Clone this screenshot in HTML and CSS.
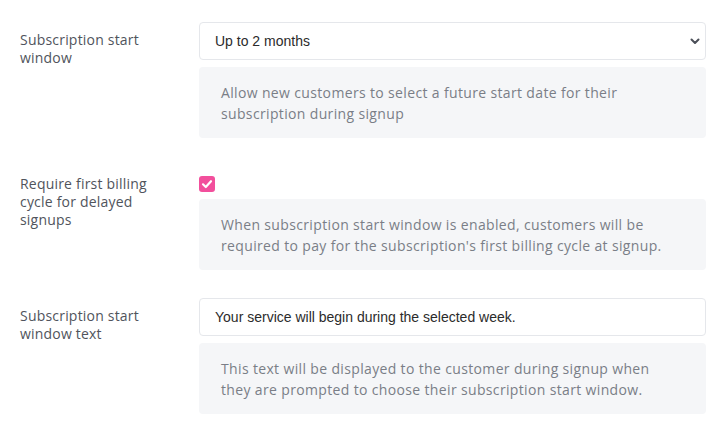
FILE: index.html
```html
<!DOCTYPE html>
<html>
<head>
<meta charset="utf-8">
<link rel="stylesheet" href="styles.css">
</head>
<body>
<div class="form">
  <div class="row">
    <div class="label">Subscription start window</div>
    <div class="field">
      <div class="select-wrap">
        <div class="control">Up to 2 months</div>
        <svg class="chevron" width="10" height="7" viewBox="0 0 10 7"><path d="M1.5 1.5 L5 5 L8.5 1.5" fill="none" stroke="#4b4f58" stroke-width="2" stroke-linecap="round" stroke-linejoin="round"/></svg>
      </div>
      <div class="help">Allow new customers to select a future start date for their subscription during signup</div>
    </div>
  </div>
  <div class="row">
    <div class="label">Require first billing cycle for delayed signups</div>
    <div class="field">
      <span class="checkbox"><svg width="16" height="16" viewBox="0 0 16 16"><path d="M4 8.3 L6.8 11 L12 5.2" fill="none" stroke="#fff" stroke-width="2.2" stroke-linecap="round" stroke-linejoin="round"/></svg></span>
      <div class="help">When subscription start window is enabled, customers will be required to pay for the subscription's first billing cycle at signup.</div>
    </div>
  </div>
  <div class="row">
    <div class="label">Subscription start window text</div>
    <div class="field">
      <div class="control">Your service will begin during the selected week.</div>
      <div class="help">This text will be displayed to the customer during signup when they are prompted to choose their subscription start window.</div>
    </div>
  </div>
</div>
</body>
</html>
```
FILE: styles.css
```css
* { box-sizing: border-box; }
body {
  margin: 0;
  background: #fff;
  font-family: "Open Sans", sans-serif;
}
.form {
  padding: 22px 14px 0 20px;
  display: flex;
  flex-direction: column;
  gap: 28px;
}
.row {
  display: flex;
}
.label {
  width: 179px;
  padding: 9px 36px 0 0;
  font-size: 14px;
  line-height: 18px;
  letter-spacing: 0.2px;
  color: #50545c;
}
.field {
  flex: 1;
  display: flex;
  flex-direction: column;
}
.select-wrap {
  position: relative;
}
.control {
  height: 38px;
  border: 1px solid #e5e7eb;
  border-radius: 4px;
  padding: 0 15px;
  display: flex;
  align-items: center;
  font-family: "Liberation Sans", Arial, sans-serif;
  font-size: 14px;
  color: #2b2b2b;
}
.chevron {
  position: absolute;
  right: 6px;
  top: 16px;
}
.checkbox {
  margin-top: 10px;
  width: 16px;
  height: 16px;
  border-radius: 3px;
  background: #f24f9c;
  display: block;
}
.checkbox svg { display: block; }
.help {
  margin-top: 7px;
  background: #f5f6f8;
  border-radius: 4px;
  padding: 15px 26px 14px 22px;
  font-size: 14px;
  line-height: 21px;
  letter-spacing: 0.35px;
  color: #7a7e87;
}
```
